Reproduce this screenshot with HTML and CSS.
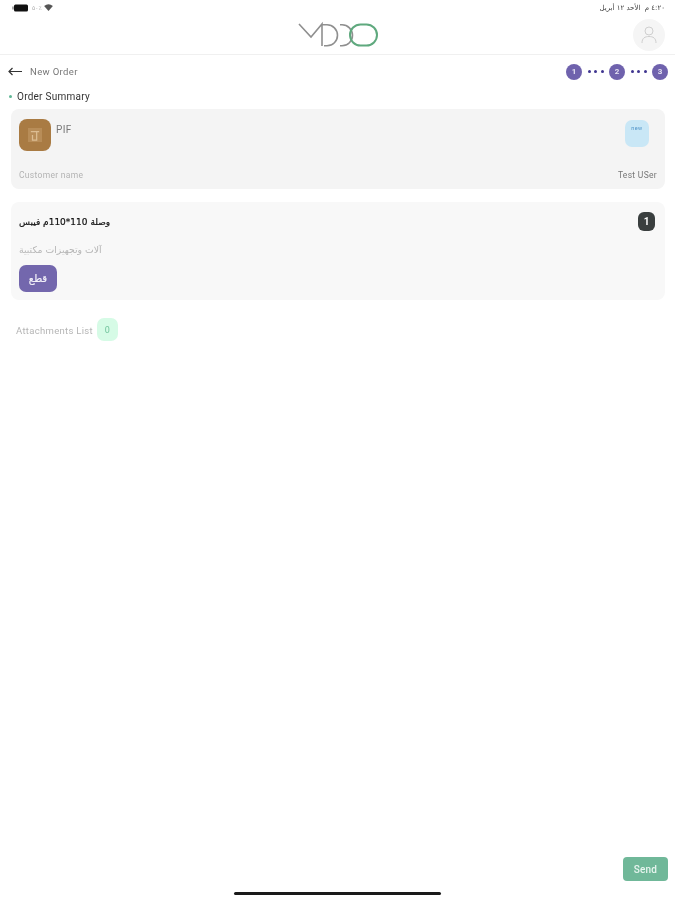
FILE: index.html
```html
<!DOCTYPE html>
<html lang="en">
<head>
<meta charset="utf-8">
<title>New Order</title>
<link rel="stylesheet" href="styles.css">
</head>
<body>
<div class="page">
  <div class="status">
    <div class="status-left">
      <svg class="battery" width="17" height="8" viewBox="0 0 17 8"><rect x="0" y="2.5" width="2" height="3" fill="#aaa"/><rect x="2" y="0.5" width="14" height="7" rx="1.5" fill="#111"/></svg>
      <span class="status-pct">٥٠٪</span>
      <svg width="9" height="7" viewBox="0 0 10 8"><path d="M0 2.200 Q5 -1.400 10 2.200 L5 8 Z" fill="#555"/></svg>
    </div>
    <span class="status-time" dir="rtl">٤:٢٠ م&nbsp; الأحد ١٢ أبريل</span>
  </div>
  <header class="topbar">
    <svg class="logo" width="82" height="28" viewBox="0 0 82 28" fill="none">
      <path d="M2 3 L14 16 L25 3 V25" stroke="#8f8f8f" stroke-width="1.600"/>
      <path d="M25 3.800 H30 A10.500 10.500 0 0 1 30 24.800 H27" stroke="#8f8f8f" stroke-width="1.600"/>
      <path d="M43 3.800 H45 A10.500 10.500 0 0 1 45 24.800 H43" stroke="#8f8f8f" stroke-width="1.600"/>
      <rect x="53" y="3.500" width="27" height="21" rx="10.500" stroke="#5fa97e" stroke-width="2"/>
    </svg>
    <div class="avatar">
      <svg width="16" height="20" viewBox="0 0 16 20" fill="none" stroke="#cfcfcf" stroke-width="1"><circle cx="8" cy="6" r="4"/><path d="M1 18 C1 13 4 11.500 8 11.500 S15 13 15 18"/></svg>
    </div>
  </header>
  <div class="subhead">
    <div class="subhead-title">
      <svg width="14" height="9" viewBox="0 0 14 9" fill="none" stroke="#333" stroke-width="1.200"><path d="M14 4.500 H1 M4.500 1 L1 4.500 L4.500 8"/></svg>
      <span>New Order</span>
    </div>
    <div class="steps">
      <span class="step">1</span><span class="dots"><i></i><i></i><i></i></span>
      <span class="step">2</span><span class="dots"><i></i><i></i><i></i></span>
      <span class="step">3</span>
    </div>
  </div>
  <h2 class="section"><span class="bullet"></span>Order Summary</h2>
  <section class="card card-summary">
    <div class="summary-top">
      <div class="brand">
        <div class="brand-mark">
          <svg width="10" height="12" viewBox="0 0 12 14" fill="none" stroke="#dcbd92" stroke-width="1.500"><path d="M1 3 H11 M8 3 V13 H3 V7"/></svg>
        </div>
      </div>
      <span class="brand-name">PIF</span>
      <div class="tag"><span>new</span></div>
    </div>
    <div class="summary-bottom">
      <span class="muted">Customer name</span>
      <span class="user">Test USer</span>
    </div>
  </section>
  <section class="card card-item">
    <div class="item-top">
      <span class="item-name" dir="rtl">وصلة 110*110م فيبس</span>
      <span class="count">1</span>
    </div>
    <div class="item-sub" dir="rtl">آلات وتجهيزات مكتبية</div>
    <span class="unit">قطع</span>
  </section>
  <div class="attachments">
    <span class="attach-label">Attachments List</span>
    <span class="attach-count">0</span>
  </div>
  <div class="spacer"></div>
  <div class="footer">
    <button class="send">Send</button>
  </div>
  <div class="home"></div>
</div>
</body>
</html>
```
FILE: styles.css
```css
* { box-sizing: border-box; }
html, body { margin: 0; background: #fff; }
body { font-family: Roboto, "DejaVu Sans", sans-serif; overflow: hidden; }
.page { width: 675px; height: 900px; display: flex; flex-direction: column; filter: blur(0.6px); }
.status { height: 15px; display: flex; justify-content: space-between; align-items: center; padding: 0 10px 0 12px; }
.status-left { display: flex; align-items: center; gap: 3px; }
.status-pct { font-size: 6px; color: #aaa; font-family: "DejaVu Sans", sans-serif; width: 9px; }
.status-time { font-size: 7px; color: #444; font-family: "DejaVu Sans", sans-serif; }
.topbar { height: 40px; border-bottom: 1px solid #f0f0f0; display: flex; align-items: center; justify-content: center; padding-bottom: 1px; position: relative; }
.logo { display: block; margin-top: 2px; }
.avatar { position: absolute; right: 10px; top: 4px; width: 32px; height: 32px; border-radius: 50%; background: #f5f5f5; display: flex; align-items: center; justify-content: center; }
.subhead { height: 33px; display: flex; justify-content: space-between; align-items: center; padding: 0 7px 0 8px; }
.subhead-title { display: flex; align-items: center; gap: 8px; font-size: 9.500px; color: #777; letter-spacing: 0.35px; }
.steps { display: flex; align-items: center; }
.step { width: 16px; height: 16px; border-radius: 50%; background: #6f62ad; color: #e5e2f2; font-size: 8px; font-weight: 700; display: flex; align-items: center; justify-content: center; }
.dots { width: 27px; display: flex; justify-content: center; gap: 3.500px; }
.dots i { width: 3px; height: 3px; border-radius: 50%; background: #3f3590; }
.section { margin: 0; height: 21px; padding: 0 0 0 9px; display: flex; align-items: flex-start; font-size: 10px; font-weight: 400; color: #333; letter-spacing: 0.25px; line-height: 17px; }
.bullet { width: 3px; height: 3px; border-radius: 50%; background: #5fb795; margin: 7px 5px 0 0; }
.card { margin: 0 10px 0 11px; border-radius: 8px; }
.card-summary { height: 80px; background: #f4f4f4; padding: 10px 8px 0; }
.summary-top { display: flex; align-items: flex-start; height: 48px; }
.brand { width: 32px; height: 32px; border-radius: 8px; background: #a97b43; display: flex; align-items: center; justify-content: center; }
.brand-mark { width: 14px; height: 14px; background: #b88d58; display: flex; align-items: center; justify-content: center; }
.brand-name { font-size: 10px; color: #777; margin: 5px 0 0 5px; letter-spacing: 0.4px; }
.tag { margin: 1px 8px 0 auto; width: 24px; height: 27px; border-radius: 7px; background: #c9e7f6; display: flex; justify-content: center; }
.tag span { font-size: 5.500px; letter-spacing: 0.4px; color: #4f94c9; margin-top: 5px; }
.summary-bottom { display: flex; justify-content: space-between; align-items: center; height: 16px; }
.muted { font-size: 8.500px; color: #b3b3b3; letter-spacing: 0.3px; }
.user { font-size: 8.500px; color: #777; letter-spacing: 0.3px; }
.card-item { height: 98px; margin-top: 13px; background: #f8f8f8; padding: 10px 10px 0 8px; }
.item-top { display: flex; justify-content: space-between; align-items: center; height: 19px; }
.item-name { font-size: 9px; color: #111; font-family: "DejaVu Sans", sans-serif; -webkit-text-stroke: 0.2px #111; padding-top: 1px; }
.count { width: 17px; height: 19px; border-radius: 6px; background: #3a3f3f; color: #fff; font-size: 10px; font-weight: 700; display: flex; align-items: center; justify-content: center; }
.item-sub { font-size: 9.300px; color: #b5b5b5; margin-top: 13px; height: 12px; line-height: 12px; width: max-content; font-family: "DejaVu Sans", sans-serif; }
.unit { display: flex; align-items: center; justify-content: center; width: 38px; height: 27px; margin-top: 9px; border-radius: 7px; background: #7367ad; color: #f3f2f9; font-size: 10px; font-weight: 400; -webkit-text-stroke: 0.2px #f3f2f9; font-family: "DejaVu Sans", sans-serif; }
.attachments { display: flex; align-items: center; gap: 4px; margin: 18px 0 0 16px; height: 23px; font-size: 9.500px; color: #b5b5b5; letter-spacing: 0.3px; }
.attach-label { padding-top: 1px; }
.attach-count { width: 21px; height: 23px; border-radius: 7px; background: #d6fbe6; color: #71c49c; font-size: 9px; display: flex; align-items: center; justify-content: center; }
.spacer { flex: 1; }
.footer { display: flex; justify-content: flex-end; padding-right: 7px; }
.send { width: 45px; height: 24px; border: 0; border-radius: 4px; background: #70b899; color: #e8f5ef; font-family: Roboto, sans-serif; font-size: 10px; font-weight: 500; letter-spacing: 0.2px; padding: 0; }
.home { width: 207px; height: 3px; border-radius: 2px; background: #1a1a1a; margin: 11px auto 5px; }
```
